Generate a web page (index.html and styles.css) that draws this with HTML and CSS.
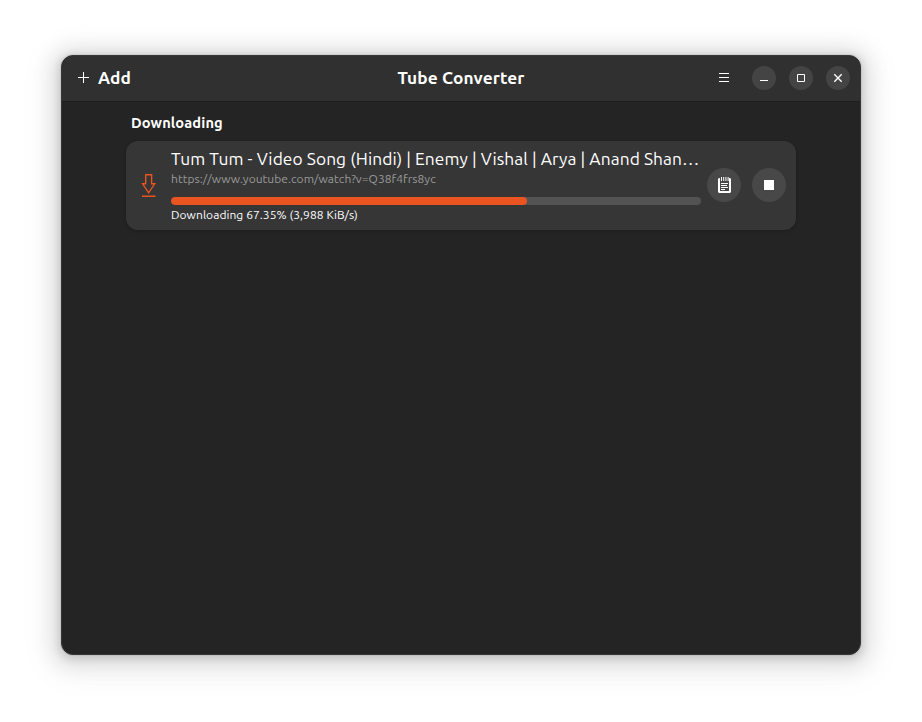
FILE: index.html
```html
<!DOCTYPE html>
<html lang="en">
<head>
<meta charset="utf-8">
<title>Tube Converter</title>
<link rel="stylesheet" href="styles.css">
</head>
<body>
<main class="window">
  <header class="headerbar">
    <div class="add">
      <svg class="plus" width="11" height="11" viewBox="0 0 11 11"><path d="M5 0h1v5h5v1H6v5H5V6H0V5h5z" fill="#fff"/></svg>
      <span class="add-label">Add</span>
    </div>
    <h1 class="title">Tube Converter</h1>
    <div class="controls">
      <svg class="menu" width="24" height="24" viewBox="0 0 24 24"><path d="M7 7h10v1H7zM7 11h10v1H7zM7 15h10v1H7z" fill="#fff"/></svg>
      <svg class="control" width="24" height="24" viewBox="0 0 24 24"><path d="M8 14h8v1H8z" fill="#fff"/></svg>
      <svg class="control" width="24" height="24" viewBox="0 0 24 24"><path d="M8.500 8.500h7v7h-7z" fill="none" stroke="#fff"/></svg>
      <svg class="control" width="24" height="24" viewBox="0 0 24 24"><path d="M8.300 8.300l7.400 7.400M15.700 8.300l-7.400 7.400" stroke="#fff" stroke-width="1.400"/></svg>
    </div>
  </header>
  <section class="content">
    <h2 class="heading">Downloading</h2>
    <article class="card">
      <svg class="arrow" width="15" height="24" viewBox="0 0 15 24"><path d="M4.700 1.800h5.900v9h3.100l-6.050 9-6.050-9h3.100z" fill="none" stroke="#e95420" stroke-width="1.400"/><path d="M1 22.500h13.500v1.500H1z" fill="#e95420"/></svg>
      <div class="details">
        <div class="name">Tum Tum - Video Song (Hindi) | Enemy | Vishal | Arya | Anand Shan…</div>
        <div class="url">https://www.youtube.com/watch?v=Q38f4frs8yc</div>
        <div class="progress"><div class="fill" style="width:67.2%"></div></div>
        <div class="status">Downloading 67.35% (3,988 KiB/s)</div>
      </div>
      <svg class="action log" width="34" height="34" viewBox="0 0 34 34"><path d="M12 10h1v13h9V10h1l1 1v13l-1 1H12l-1-1V11z" fill="#fff"/><path d="M14 9h1v4h-1zM16.200 9h1v4h-1zM18.400 9h1v4h-1zM20.600 9h1v4h-1zM14 15h7v1h-7zM14 17h6v1h-6zM14 19h7v1h-7zM14 21h4v1h-4z" fill="#fff"/></svg>
      <svg class="action" width="34" height="34" viewBox="0 0 34 34"><path d="M12 12h10v10H12z" fill="#fff"/></svg>
    </article>
  </section>
</main>
</body>
</html>
```
FILE: styles.css
```css
* { box-sizing: border-box; }
body {
  margin: 0;
  padding: 55px 61px;
  height: 722px;
  background: #fff;
  color: #fff;
  font-family: Ubuntu, "Noto Sans", sans-serif;
  overflow: hidden;
}
svg { display: block; flex: none; }
h1, h2 { margin: 0; }
.window {
  width: 800px;
  height: 600px;
  border-radius: 12px;
  background: #242424;
  overflow: hidden;
  border: 1px solid #373737;
  box-shadow: 0 2px 8px 2px rgba(0,0,0,.13), 0 3px 20px 10px rgba(0,0,0,.09), 0 6px 32px 16px rgba(0,0,0,.04), 0 0 0 1px rgba(0,0,0,.05);
}
.headerbar {
  display: grid;
  grid-template-columns: 1fr auto 1fr;
  align-items: center;
  height: 46px;
  padding: 0 10px 1px;
  background: #303030;
  border-bottom: 1px solid #1e1e1e;
}
.add {
  display: flex;
  align-items: center;
  gap: 9px;
  padding-left: 6px;
  font-weight: 700;
  font-size: 17.300px;
  letter-spacing: .1px;
}
.plus { margin-bottom: 1px; }
.add-label, .title { line-height: 24px; }
.title { font-size: 17.300px; letter-spacing: .12px; }
.controls { display: flex; justify-content: flex-end; gap: 13px; }
.menu { margin-right: 3px; }
.control { border-radius: 50%; background: #444; }
.content { padding: 11px 64px 0; }
.heading { padding-left: 5px; font-size: 14.667px; letter-spacing: .1px; line-height: 20px; height: 28px; }
.card {
  display: flex;
  align-items: center;
  height: 89px;
  padding: 0 10px 1px 15px;
  border-radius: 12px;
  background: #363636;
  box-shadow: 0 1px 3px 1px rgba(0,0,0,.14);
}
.details { width: 530px; margin: 0 6px 0 15px; white-space: nowrap; }
.name { height: 25px; line-height: 26px; font-size: 17.333px; letter-spacing: .08px; }
.url { height: 26px; line-height: 15px; font-size: 12px; letter-spacing: .05px; color: #9a9a9a; }
.progress { height: 8px; border-radius: 4px; background: #535353; overflow: hidden; }
.fill { height: 8px; border-radius: 4px; background: #e95420; }
.status { height: 19px; line-height: 20px; font-size: 12px; letter-spacing: .06px; }
.action { border-radius: 50%; background: #484848; }
.log { margin-right: 11px; }
```
